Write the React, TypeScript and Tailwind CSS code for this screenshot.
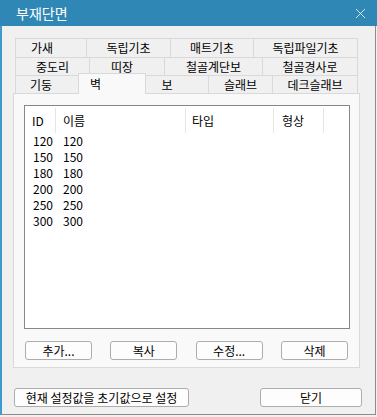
import { X } from 'lucide-react';

const font = { fontFamily: '"Noto Sans CJK KR", "Noto Sans", sans-serif' };

type Tab = { label: string; w: string; text?: string };

const row1: Tab[] = [
  { label: '가새', w: 'w-[71px]', text: 'pr-[18px]' },
  { label: '독립기초', w: 'w-[84px]' },
  { label: '매트기초', w: 'w-[83px]' },
  { label: '독립파일기초', w: 'w-[105px]' },
];

const row2: Tab[] = [
  { label: '중도리', w: 'w-[74px]' },
  { label: '띠장', w: 'w-[75px]', text: 'pr-[10px]' },
  { label: '철골계단보', w: 'w-[98px]' },
  { label: '철골경사로', w: 'w-[96px]' },
];

const row3: Tab[] = [
  { label: '기둥', w: 'w-[63px]', text: 'pr-[12px]' },
  { label: '벽', w: 'w-[68px]' },
  { label: '보', w: 'w-[62px]', text: 'pr-[20px]' },
  { label: '슬래브', w: 'w-[64px]' },
  { label: '데크슬래브', w: 'w-[86px]' },
];

const rows = ['120', '150', '180', '200', '250', '300'];

function TabRow({ tabs, h }: { tabs: Tab[]; h: string }) {
  return (
    <div className={`flex ${h}`}>
      {tabs.map((t, i) => (
        <div
          key={t.label}
          className={`${t.w} flex items-center justify-center border-t border-l border-[#d9d9d9] bg-[#f0f0f0] text-[12px] text-black ${
            i === tabs.length - 1 ? 'border-r' : ''
          } ${t.text ?? ''}`}
        >
          {t.label}
        </div>
      ))}
    </div>
  );
}

function Btn({ label, w }: { label: string; w: string }) {
  return (
    <button
      className={`${w} h-[19px] rounded-[3px] border border-[#adadad] bg-[#fdfdfd] text-[12px] leading-none text-black flex items-center justify-center`}
    >
      {label}
    </button>
  );
}

export default function App() {
  return (
    <div className="w-[377px] h-[417px] bg-[#f0f0f0] flex flex-col" style={font}>
      {/* Title bar */}
      <div className="h-[26px] bg-[#2f87b5] flex items-center pl-4 pr-[8px] shrink-0">
        <span className="flex-1 text-[14px] text-white">부재단면</span>
        <X size={17} strokeWidth={1.1} className="text-white" />
      </div>

      <div className="flex-1 flex flex-col border-l-2 border-l-[#3d9bd0] border-r border-r-[#8c8c8c] border-b border-b-[#8c8c8c] mr-px mb-[2px]">
        {/* Tabs */}
        <div className="pt-[12px] pl-[13px]">
          <div className="flex flex-col">
            <TabRow tabs={row1} h="h-[19px]" />
            <TabRow tabs={row2} h="h-[18px]" />
            <div className="flex h-[18px]">
              {row3.map((t, i) =>
                t.label === '벽' ? (
                  <div
                    key={t.label}
                    className={`${t.w} relative z-10 -mt-[2px] h-[21px] border-t border-l border-r border-[#d9d9d9] bg-[#f9f9f9] text-[12px] text-black pl-[11px] pt-[1px]`}
                  >
                    {t.label}
                  </div>
                ) : (
                  <div
                    key={t.label}
                    className={`${t.w} flex items-center justify-center border-t border-[#d9d9d9] bg-[#f0f0f0] text-[12px] text-black ${
                      i === row3.length - 1 ? 'border-r' : ''
                    } ${i === 2 ? '' : 'border-l'} ${t.text ?? ''}`}
                  >
                    {t.label}
                  </div>
                ),
              )}
            </div>
          </div>
        </div>

        {/* Panel */}
        <div className="ml-[11px] w-[347px] h-[275px] bg-[#f9f9f9] border border-[#d9d9d9] flex flex-col px-[10px] pt-[11px]">
          <div className="w-[326px] h-[224px] bg-white border border-[#828790] text-[12px] text-black">
            <div className="flex h-[27px] pt-[2px]">
              <div className="w-[31px] pl-[7px] flex items-center border-r border-[#e5e5e5]">ID</div>
              <div className="w-[130px] pl-[7px] flex items-center border-r border-[#e5e5e5]">이름</div>
              <div className="w-[88px] pl-[6px] flex items-center border-r border-[#e5e5e5]">타입</div>
              <div className="w-[50px] pl-[8px] flex items-center border-r border-[#e5e5e5]">형상</div>
            </div>
            {rows.map((r) => (
              <div key={r} className="flex h-[16px] items-center leading-none">
                <div className="w-[31px] pl-[8px]">{r}</div>
                <div className="pl-[7px]">{r}</div>
              </div>
            ))}
          </div>
          <div className="flex justify-between mt-[12px] pl-px pr-[1px]">
            <Btn label="추가..." w="w-[67px]" />
            <Btn label="복사" w="w-[67px]" />
            <Btn label="수정..." w="w-[67px]" />
            <Btn label="삭제" w="w-[67px]" />
          </div>
        </div>

        {/* Bottom buttons */}
        <div className="flex justify-between mt-[20px] pl-[12px] pr-[13px]">
          <Btn label="현재 설정값을 초기값으로 설정" w="w-[175px]" />
          <Btn label="닫기" w="w-[102px]" />
        </div>
      </div>
    </div>
  );
}
